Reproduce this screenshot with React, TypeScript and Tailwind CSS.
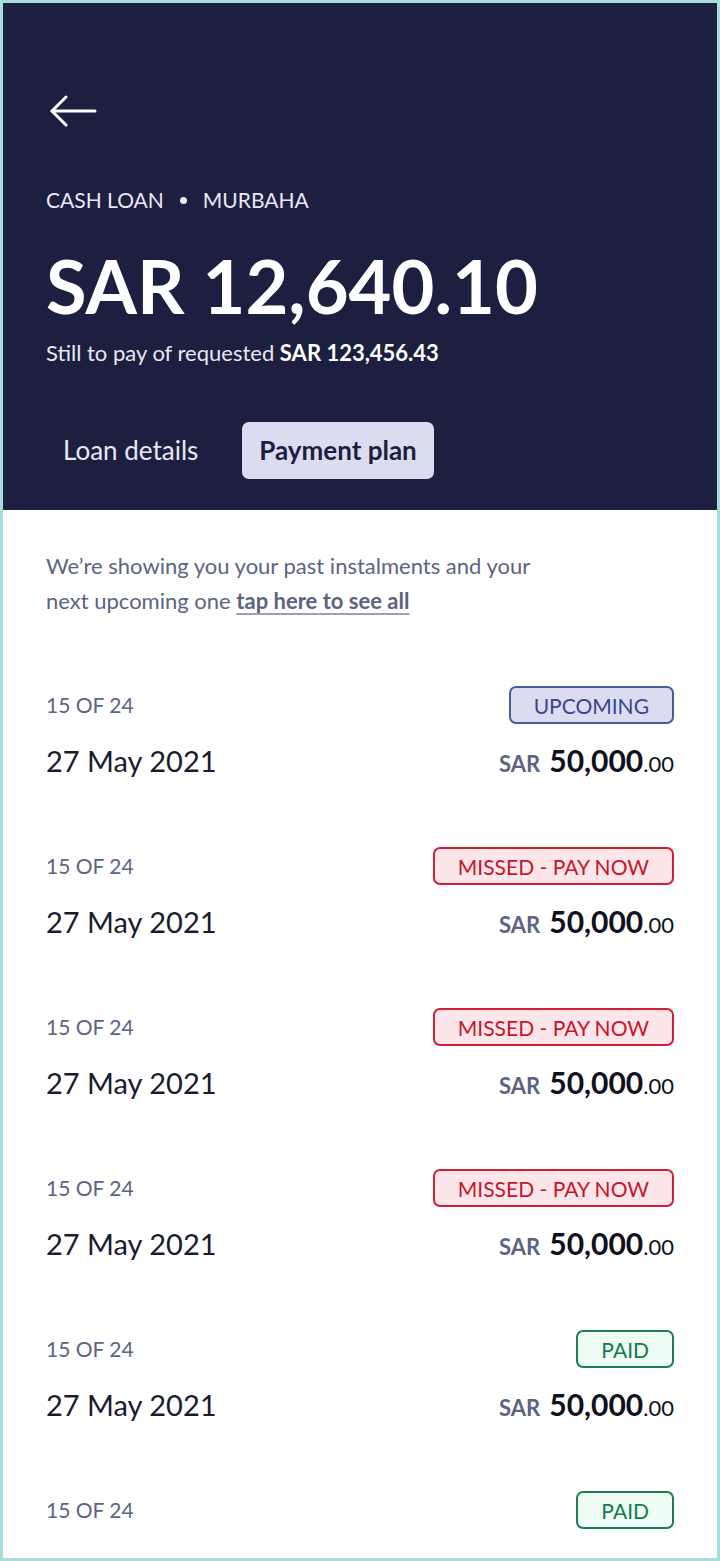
import { FC } from 'react';

type Status = 'upcoming' | 'missed' | 'paid';

interface Instalment {
	index: string;
	date: string;
	amount: string;
	status: Status;
}

const instalments: Instalment[] = [
	{ index: '15 OF 24', date: '27 May 2021', amount: '50,000', status: 'upcoming' },
	{ index: '15 OF 24', date: '27 May 2021', amount: '50,000', status: 'missed' },
	{ index: '15 OF 24', date: '27 May 2021', amount: '50,000', status: 'missed' },
	{ index: '15 OF 24', date: '27 May 2021', amount: '50,000', status: 'missed' },
	{ index: '15 OF 24', date: '27 May 2021', amount: '50,000', status: 'paid' },
	{ index: '15 OF 24', date: '27 May 2021', amount: '50,000', status: 'paid' },
];

const badgeStyles: Record<Status, { label: string; className: string }> = {
	upcoming: { label: 'UPCOMING', className: 'bg-[#dcdcf0] border-[#4b5aa0] text-[#3a4788]' },
	missed: { label: 'MISSED - PAY NOW', className: 'bg-[#fde6e9] border-[#d21f33] text-[#c8142c]' },
	paid: { label: 'PAID', className: 'bg-[#eefcf5] border-[#1c7d55] text-[#157a4e]' },
};

const BackArrow: FC = () => (
	<svg className="ml-[3px]" width="48" height="32" viewBox="0 0 48 32" fill="none" stroke="white" strokeWidth="3" strokeLinecap="round" strokeLinejoin="round">
		<path d="M46 16H3" />
		<path d="M17 2L3 16l14 14" />
	</svg>
);

const Badge: FC<{ status: Status }> = ({ status }) => {
	const { label, className } = badgeStyles[status];
	return (
		<span className={`h-[38px] px-[23px] flex items-center rounded-[7px] border-2 text-[21px] leading-none ${className}`}>
			{label}
		</span>
	);
};

// the last row is cut by the bottom of the screen, so it only shows its top line
const InstalmentRow: FC<{ item: Instalment; cut?: boolean }> = ({ item, cut }) => (
	<div className="flex flex-col">
		<div className="flex items-center justify-between">
			<span className="text-[21px] leading-[26px] text-[#5c6482]">{item.index}</span>
			<Badge status={item.status} />
		</div>
		{!cut && (
			<div className="mt-[18px] flex items-baseline justify-between leading-[36px]">
				<span className="text-[29px] text-[#1a1b2e]">{item.date}</span>
				<span className="flex items-baseline">
					<span className="text-[22px] font-bold text-[#5c6482]">SAR</span>
					<span className="ml-[9px] text-[30px] font-bold text-[#0f1020]">{item.amount}</span>
					<span className="text-[22px] text-[#0f1020]">.00</span>
				</span>
			</div>
		)}
	</div>
);

const App: FC = () => {
	return (
		<div className="h-[1561px] overflow-hidden border-[3px] border-[#a8dcdc] bg-white font-['Lato',sans-serif]">
			<header className="bg-[#1c1f40] px-[43px] pt-[92px] pb-[31px]">
				<BackArrow />
				<div className="mt-[59px] flex items-center text-[21px] leading-[28px] text-[#e8e8f0]">
					<span>CASH LOAN</span>
					<span className="mx-[16px] h-[7px] w-[7px] rounded-full bg-[#e8e8f0]" />
					<span>MURBAHA</span>
				</div>
				<h1 className="mt-[31px] text-[74px] font-bold leading-[82px] text-white">SAR 12,640.10</h1>
				<p className="mt-[12px] text-[22px] leading-[28px] text-[#e8e8f0]">
					Still to pay of requested <span className="font-bold text-white">SAR 123,456.43</span>
				</p>
				<div className="mt-[55px] flex items-center gap-[27px]">
					<button className="h-[57px] px-[17px] rounded-[7px] text-[26px] text-[#e8e8f0]">Loan details</button>
					<button className="h-[57px] px-[17px] rounded-[7px] bg-[#dcdcf0] text-[26px] font-bold text-[#1c1f40]">
						Payment plan
					</button>
				</div>
			</header>
			<main className="px-[43px] pt-[38px]">
				<p className="text-[22px] leading-[35px] text-[#5c6482]">
					We’re showing you your past instalments and your
					<br />
					next upcoming one{' '}
					<a className="font-bold underline underline-offset-[4px] decoration-[#9aa0b8]">tap here to see all</a>
				</p>
				<div className="mt-[68px] flex flex-col gap-[65px]">
					{instalments.map((item, i) => (
						<InstalmentRow key={i} item={item} cut={i === instalments.length - 1} />
					))}
				</div>
			</main>
		</div>
	);
};

export default App;
